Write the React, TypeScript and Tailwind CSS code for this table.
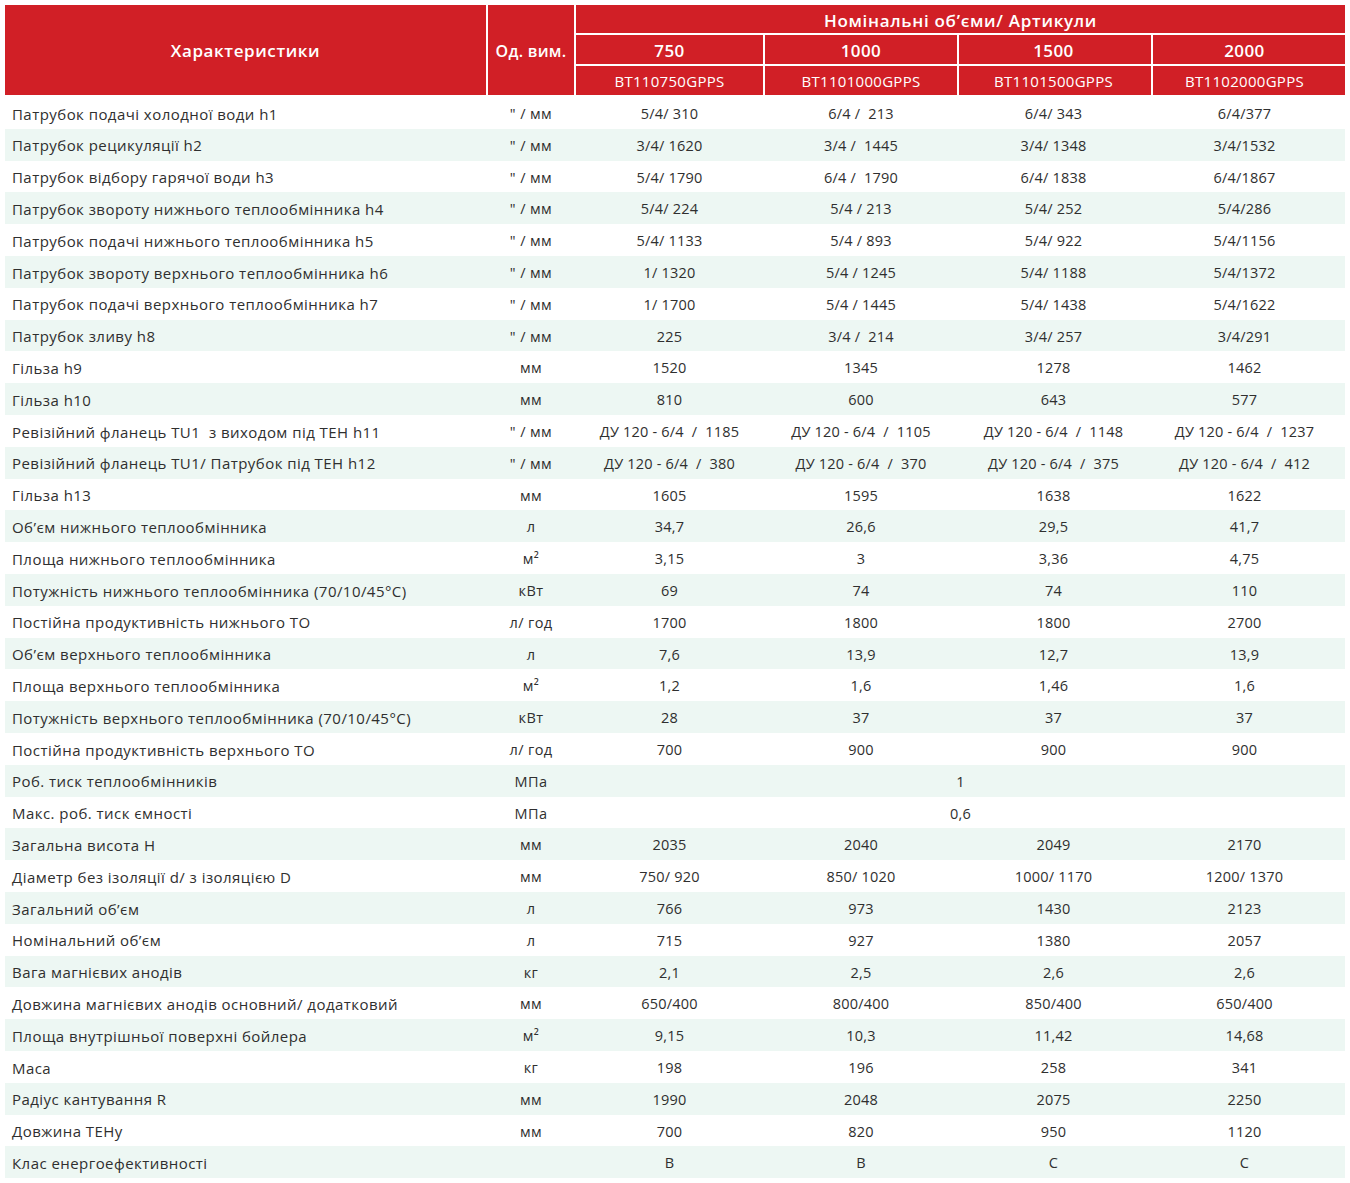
import React from "react";

type Row = { label: string; unit: string; vals: string[]; span?: boolean };

const rows: Row[] = [
  { label: "Патрубок подачі холодної води h1", unit: "\" / мм", vals: ["5/4/ 310", "6/4 /  213", "6/4/ 343", "6/4/377"] },
  { label: "Патрубок рецикуляції h2", unit: "\" / мм", vals: ["3/4/ 1620", "3/4 /  1445", "3/4/ 1348", "3/4/1532"] },
  { label: "Патрубок відбору гарячої води h3", unit: "\" / мм", vals: ["5/4/ 1790", "6/4 /  1790", "6/4/ 1838", "6/4/1867"] },
  { label: "Патрубок звороту нижнього теплообмінника h4", unit: "\" / мм", vals: ["5/4/ 224", "5/4 / 213", "5/4/ 252", "5/4/286"] },
  { label: "Патрубок подачі нижнього теплообмінника h5", unit: "\" / мм", vals: ["5/4/ 1133", "5/4 / 893", "5/4/ 922", "5/4/1156"] },
  { label: "Патрубок звороту верхнього теплообмінника h6", unit: "\" / мм", vals: ["1/ 1320", "5/4 / 1245", "5/4/ 1188", "5/4/1372"] },
  { label: "Патрубок подачі верхнього теплообмінника h7", unit: "\" / мм", vals: ["1/ 1700", "5/4 / 1445", "5/4/ 1438", "5/4/1622"] },
  { label: "Патрубок зливу h8", unit: "\" / мм", vals: ["225", "3/4 /  214", "3/4/ 257", "3/4/291"] },
  { label: "Гільза h9", unit: "мм", vals: ["1520", "1345", "1278", "1462"] },
  { label: "Гільза h10", unit: "мм", vals: ["810", "600", "643", "577"] },
  { label: "Ревізійний фланець TU1  з виходом під ТЕН h11", unit: "\" / мм", vals: ["ДУ 120 - 6/4  /  1185", "ДУ 120 - 6/4  /  1105", "ДУ 120 - 6/4  /  1148", "ДУ 120 - 6/4  /  1237"] },
  { label: "Ревізійний фланець TU1/ Патрубок під ТЕН h12", unit: "\" / мм", vals: ["ДУ 120 - 6/4  /  380", "ДУ 120 - 6/4  /  370", "ДУ 120 - 6/4  /  375", "ДУ 120 - 6/4  /  412"] },
  { label: "Гільза h13", unit: "мм", vals: ["1605", "1595", "1638", "1622"] },
  { label: "Об’єм нижнього теплообмінника", unit: "л", vals: ["34,7", "26,6", "29,5", "41,7"] },
  { label: "Площа нижнього теплообмінника", unit: "м²", vals: ["3,15", "3", "3,36", "4,75"] },
  { label: "Потужність нижнього теплообмінника (70/10/45°С)", unit: "кВт", vals: ["69", "74", "74", "110"] },
  { label: "Постійна продуктивність нижнього ТО", unit: "л/ год", vals: ["1700", "1800", "1800", "2700"] },
  { label: "Об’єм верхнього теплообмінника", unit: "л", vals: ["7,6", "13,9", "12,7", "13,9"] },
  { label: "Площа верхнього теплообмінника", unit: "м²", vals: ["1,2", "1,6", "1,46", "1,6"] },
  { label: "Потужність верхнього теплообмінника (70/10/45°С)", unit: "кВт", vals: ["28", "37", "37", "37"] },
  { label: "Постійна продуктивність верхнього ТО", unit: "л/ год", vals: ["700", "900", "900", "900"] },
  { label: "Роб. тиск теплообмінників", unit: "МПа", vals: ["1"], span: true },
  { label: "Макс. роб. тиск ємності", unit: "МПа", vals: ["0,6"], span: true },
  { label: "Загальна висота H", unit: "мм", vals: ["2035", "2040", "2049", "2170"] },
  { label: "Діаметр без ізоляції d/ з ізоляцією D", unit: "мм", vals: ["750/ 920", "850/ 1020", "1000/ 1170", "1200/ 1370"] },
  { label: "Загальний об’єм", unit: "л", vals: ["766", "973", "1430", "2123"] },
  { label: "Номінальний об’єм", unit: "л", vals: ["715", "927", "1380", "2057"] },
  { label: "Вага магнієвих анодів", unit: "кг", vals: ["2,1", "2,5", "2,6", "2,6"] },
  { label: "Довжина магнієвих анодів основний/ додатковий", unit: "мм", vals: ["650/400", "800/400", "850/400", "650/400"] },
  { label: "Площа внутрішньої поверхні бойлера", unit: "м²", vals: ["9,15", "10,3", "11,42", "14,68"] },
  { label: "Маса", unit: "кг", vals: ["198", "196", "258", "341"] },
  { label: "Радіус кантування R", unit: "мм", vals: ["1990", "2048", "2075", "2250"] },
  { label: "Довжина ТЕНу", unit: "мм", vals: ["700", "820", "950", "1120"] },
  { label: "Клас енергоефективності", unit: "", vals: ["B", "B", "C", "C"] },
];

const cols = "grid grid-cols-[481px_86px_187px_192px_192px_192px] gap-x-[2px]";
const colPad = ["", "", "pr-[3px]", "pr-[9px]"];

export default function App() {
  return (
    <div
      className="w-[1350px] h-[1183px] bg-white pt-[5px] pl-[5px] text-[#2f2f2f]"
      style={{ fontFamily: '"Open Sans", "Noto Sans", sans-serif' }}
    >
      <div className="w-[1340px]">
        <div className={`${cols} grid-rows-[28px_29px_29px] gap-y-[2px] text-white`}>
          <div className="row-span-3 bg-[#d11f26] flex items-center justify-center pt-[2px] text-[17px] font-semibold tracking-[0.6px]">
            Характеристики
          </div>
          <div className="row-span-3 bg-[#d11f26] flex items-center justify-center pt-[2px] text-[16px] font-semibold tracking-[0.3px]">
            Од. вим.
          </div>
          <div className="col-span-4 bg-[#d11f26] flex items-center justify-center pt-[3px] text-[17px] font-semibold tracking-[0.7px]">
            Номінальні об’єми/ Артикули
          </div>
          {["750", "1000", "1500", "2000"].map((v, j) => (
            <div key={v} className={`bg-[#d11f26] flex items-center justify-center pt-[3px] text-[17px] font-semibold tracking-[0.4px] ${colPad[j]}`}>
              {v}
            </div>
          ))}
          {["BT110750GPPS", "BT1101000GPPS", "BT1101500GPPS", "BT1102000GPPS"].map((v, j) => (
            <div key={v} className={`bg-[#d11f26] flex items-center justify-center pt-[2px] text-[15px] tracking-[0.3px] ${colPad[j]}`}>
              {v}
            </div>
          ))}
        </div>
        <div className="mt-[2px]">
          {rows.map((r, i) => (
            <div
              key={i}
              className={`${cols} h-[31.8px] items-center pt-[2px] ${i % 2 === 1 ? "bg-[#edf7f3]" : "bg-white"}`}
            >
              <div className="pl-[7px] whitespace-pre text-[15px] tracking-[0.45px]">{r.label}</div>
              <div className="text-center whitespace-pre text-[14.5px] tracking-[0.4px]">{r.unit}</div>
              {r.span ? (
                <div className="col-span-4 text-center whitespace-pre text-[14.5px] tracking-[0.2px]">{r.vals[0]}</div>
              ) : (
                r.vals.map((v, j) => (
                  <div key={j} className={`text-center whitespace-pre text-[14.5px] tracking-[0.2px] ${colPad[j]}`}>
                    {v}
                  </div>
                ))
              )}
            </div>
          ))}
        </div>
      </div>
    </div>
  );
}
